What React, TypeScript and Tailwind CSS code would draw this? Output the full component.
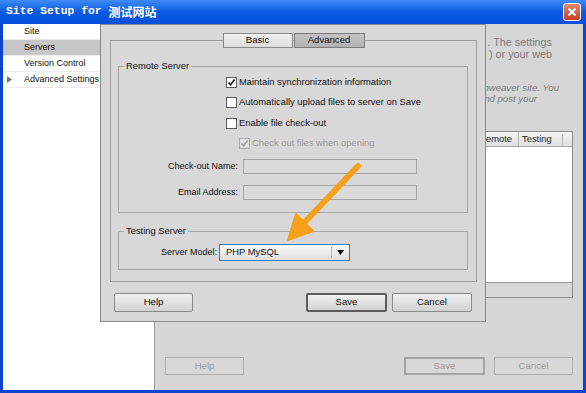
import type { ReactNode } from 'react'

const SIDEBAR = [
  { label: 'Site', active: false, arrow: false },
  { label: 'Servers', active: true, arrow: false },
  { label: 'Version Control', active: false, arrow: false },
  { label: 'Advanced Settings', active: false, arrow: true },
]

function Check({ checked, disabled }: { checked?: boolean; disabled?: boolean }) {
  return (
    <span
      className={`flex h-[11px] w-[11px] shrink-0 items-center justify-center border ${
        disabled ? 'border-[#a8a8a8] bg-[#e2e2e2]' : 'border-[#5a5a5a] bg-white'
      }`}
    >
      {checked && (
        <svg width="9" height="9" viewBox="0 0 9 9">
          <path
            d="M1.5 4.5 L3.6 6.8 L7.6 1.6"
            fill="none"
            stroke={disabled ? '#9a9a9a' : '#1a1a1a'}
            strokeWidth="1.6"
          />
        </svg>
      )}
    </span>
  )
}

function DlgButton({ children, primary, w }: { children: ReactNode; primary?: boolean; w: string }) {
  return (
    <button
      type="button"
      className={`${w} h-[19px] rounded-[2px] bg-gradient-to-b from-[#f0f0f0] to-[#d2d2d2] text-[9.6px] text-[#111] ${
        primary ? 'border-2 border-[#5c5c5c]' : 'border border-[#8a8a8a]'
      }`}
    >
      {children}
    </button>
  )
}

function BgButton({ children, primary, w }: { children: ReactNode; primary?: boolean; w: string }) {
  return (
    <button
      type="button"
      className={`${w} h-[18px] bg-[#d8d8d8] text-[9.6px] text-[#9a9a9a] ${
        primary ? 'border-2 border-[#a4a4a4]' : 'border border-[#b0b0b0]'
      }`}
    >
      {children}
    </button>
  )
}

export default function App() {
  return (
    <div className="relative h-[393px] w-[586px] overflow-hidden bg-[#0a44d0] font-['Liberation_Sans',Arial,sans-serif] text-[9.4px] text-[#111]">
      {/* title bar */}
      <div className="flex h-[24px] items-center bg-gradient-to-b from-[#3d8cf6] via-[#0a5ae4] to-[#0650da] pl-[6px] pr-[5px]">
        <span className="font-['Liberation_Mono',monospace] text-[11.4px] font-bold whitespace-pre text-white">
          Site Setup for{' '}
        </span>
        <span className="font-['Noto_Sans_CJK_SC',sans-serif] text-[12px] font-bold text-white">测试网站</span>
        <div className="ml-auto flex h-[18px] w-[18px] items-center justify-center rounded-[3px] border border-white bg-gradient-to-b from-[#e8866a] to-[#c63b1c]">
          <svg width="10" height="10" viewBox="0 0 10 10">
            <path d="M1.5 1.5 L8.5 8.5 M8.5 1.5 L1.5 8.5" stroke="white" strokeWidth="2" />
          </svg>
        </div>
      </div>

      {/* window body */}
      <div className="mx-[3px] flex h-[366px]">
        <aside className="w-[152px] shrink-0 border-r border-[#9c9c9c] bg-white">
          {SIDEBAR.map((s) => (
            <div
              key={s.label}
              className={`relative flex h-[16px] items-center border-b border-[#ececec] pl-[21px] whitespace-nowrap text-[9px] ${
                s.active ? 'bg-[#c6c6c6]' : ''
              }`}
            >
              {s.arrow && (
                <svg className="absolute left-[4px]" width="5" height="7" viewBox="0 0 5 7">
                  <path d="M0 0 L5 3.5 L0 7 Z" fill="#777" />
                </svg>
              )}
              {s.label}
            </div>
          ))}
        </aside>

        <main className="flex min-w-0 flex-1 flex-col bg-[#d6d6d6] text-[#7a7a7a]">
          {/* only the ends of these lines show beside the dialog */}
          <div className="mt-[12px] text-[10.8px] leading-[12px] whitespace-nowrap">
            <div className="mr-[31px] text-right">. The settings</div>
            <div className="mr-[31px] text-right">) or your web</div>
          </div>
          <div className="mt-[22px] text-[9.6px] leading-[11px] whitespace-nowrap italic">
            <div className="mr-[24px] text-right">nweaver site. You</div>
            <div className="mr-[46px] text-right">nd post your</div>
          </div>

          <div className="mt-[27px] mr-[10px] ml-[10px] flex h-[167px] flex-col border border-[#8a8a8a]">
            <div className="flex h-[15px] items-center border-b border-[#a8a8a8] bg-gradient-to-b from-[#f4f4f4] to-[#e0e0e0] text-[9.4px] text-[#222]">
              <div className="flex-1" />
              <div className="w-[32px]">emote</div>
              <div className="w-[44px] border-l border-[#b4b4b4] pl-[3px]">Testing</div>
              <div className="h-[11px] w-[10px] border-l border-[#b4b4b4]" />
            </div>
            <div className="flex-1 bg-white" />
            <div className="h-[15px] border-t border-[#9a9a9a] bg-[#d8d8d8]" />
          </div>

          <div className="mt-auto mb-[15px] flex items-center pr-[10px] pl-[10px]">
            <BgButton w="w-[79px]">Help</BgButton>
            <div className="flex-1" />
            <BgButton w="w-[81px]" primary>
              Save
            </BgButton>
            <div className="w-[9px]" />
            <BgButton w="w-[79px]">Cancel</BgButton>
          </div>
        </main>
      </div>

      {/* Servers > Advanced dialog */}
      <div className="absolute top-[24px] left-[100px] flex h-[298px] w-[386px] flex-col border border-[#8a8a8a] bg-[#d8d8d8]">
        <div className="mt-[15px] ml-[9px] flex h-[242px] w-[367px] flex-col border border-[#9c9c9c]">
          <div className="-mt-[8px] flex h-[15px] justify-center">
            <div className="flex w-[70px] items-center justify-center border border-[#8a8a8a] bg-gradient-to-b from-[#f2f2f2] to-[#dcdcdc] text-[9.6px]">
              Basic
            </div>
            <div className="ml-[1px] flex w-[71px] items-center justify-center border border-[#7a7a7a] bg-gradient-to-b from-[#c4c4c4] to-[#b2b2b2] text-[9.6px]">
              Advanced
            </div>
          </div>

          <fieldset className="mt-[12px] mr-[8px] ml-[7px] border border-[#a6a6a6] px-0 pb-[12px]">
            <legend className="ml-[5px] px-[2px] leading-[12px] text-[9.4px]">Remote Server</legend>
            <div className="mt-[3px] flex h-[14px] items-center gap-[2px] pl-[107px]">
              <Check checked />
              <span>Maintain synchronization information</span>
            </div>
            <div className="mt-[6px] flex h-[14px] items-center gap-[2px] pl-[107px]">
              <Check />
              <span>Automatically upload files to server on Save</span>
            </div>
            <div className="mt-[7px] flex h-[14px] items-center gap-[2px] pl-[107px]">
              <Check />
              <span>Enable file check-out</span>
            </div>
            <div className="mt-[6px] flex h-[14px] items-center gap-[2px] pl-[120px] text-[#9a9a9a]">
              <Check checked disabled />
              <span>Check out files when opening</span>
            </div>
            <div className="mt-[9px] flex h-[15px] items-center">
              <span className="w-[119px] text-right text-[9px]">Check-out Name:</span>
              <span className="ml-[5px] h-[15px] w-[174px] border border-[#a4a4a4] bg-[#dadada]" />
            </div>
            <div className="mt-[11px] flex h-[15px] items-center">
              <span className="w-[119px] text-right text-[9px]">Email Address:</span>
              <span className="ml-[5px] h-[15px] w-[174px] border border-[#a4a4a4] bg-[#dadada]" />
            </div>
          </fieldset>

          <fieldset className="mt-[12px] mr-[8px] ml-[7px] border border-[#a6a6a6] px-0 pb-[8px]">
            <legend className="ml-[5px] px-[2px] leading-[12px] text-[9.4px]">Testing Server</legend>
            <div className="mt-[7px] flex h-[17px] items-center">
              <span className="w-[98px] text-right text-[9px]">Server Model:</span>
              <div className="ml-[2px] flex h-[17px] w-[131px] items-center border border-[#3b7bb3] bg-gradient-to-b from-[#fafafa] to-[#dedede]">
                <span className="flex-1 pl-[6px]">PHP MySQL</span>
                <span className="h-[11px] border-l border-[#b0b0b0]" />
                <svg className="mx-[5px]" width="7" height="5" viewBox="0 0 7 5">
                  <path d="M0 0 L7 0 L3.5 5 Z" fill="#111" />
                </svg>
              </div>
            </div>
          </fieldset>
        </div>

        <div className="mt-[11px] flex items-center pr-[13px] pl-[13px]">
          <DlgButton w="w-[79px]">Help</DlgButton>
          <div className="flex-1" />
          <DlgButton w="w-[81px]" primary>
            Save
          </DlgButton>
          <div className="w-[5px]" />
          <DlgButton w="w-[80px]">Cancel</DlgButton>
        </div>
      </div>

      {/* annotation arrow */}
      <svg className="pointer-events-none absolute inset-0" width="586" height="393" viewBox="0 0 586 393">
        <line x1="358" y1="166" x2="304" y2="223" stroke="#f7a01b" strokeWidth="6" strokeLinecap="round" />
        <polygon points="288,240 313,231 296,214" fill="#f7a01b" stroke="#f7a01b" strokeWidth="2" strokeLinejoin="round" />
      </svg>
    </div>
  )
}
